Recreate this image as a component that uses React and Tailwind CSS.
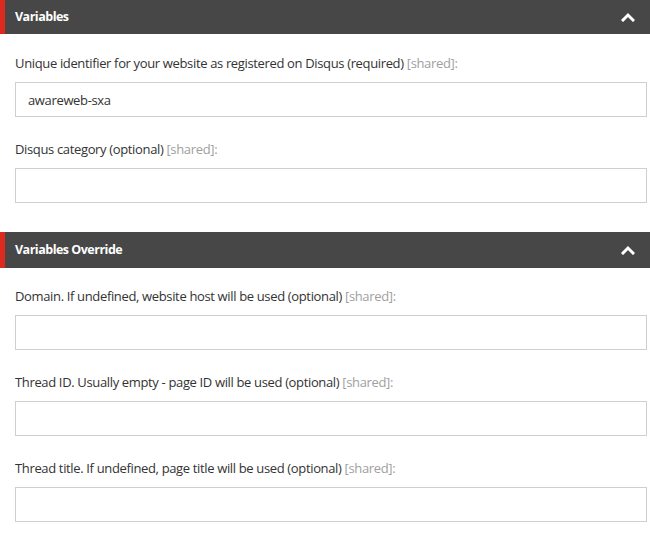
const sections = [
  {
    title: "Variables",
    first: true,
    fields: [
      { label: "Unique identifier for your website as registered on Disqus (required)", value: "awareweb-sxa" },
      { label: "Disqus category (optional)", value: "" },
    ],
  },
  {
    title: "Variables Override",
    fields: [
      { label: "Domain. If undefined, website host will be used (optional)", value: "" },
      { label: "Thread ID. Usually empty - page ID will be used (optional)", value: "" },
      { label: "Thread title. If undefined, page title will be used (optional)", value: "" },
    ],
  },
];

function Chevron() {
  return (
    <svg width="14" height="10" viewBox="0 0 14 10" className="mr-[15px]">
      <path d="M2 8 L7 3 L12 8" fill="none" stroke="#fff" strokeWidth="3" strokeLinecap="square" />
    </svg>
  );
}

function Field({ label, value }) {
  return (
    <div className="mb-[23px] last:mb-0">
      <div className="h-[18px] leading-[18px] mb-[10px] text-[#333] tracking-[-0.35px] whitespace-nowrap">
        {label} <span className="text-[#a0a0a0]">[shared]</span>
        <span className="text-[#a0a0a0]">:</span>
      </div>
      <input
        type="text"
        defaultValue={value}
        className="block w-full h-[35px] border border-[#cfcfcf] bg-white px-[12px] text-[13px] text-[#333] tracking-[-0.35px] outline-none"
        style={{ fontFamily: "inherit" }}
      />
    </div>
  );
}

export default function App() {
  return (
    <div
      className="w-[650px] h-[535px] bg-white text-[13px] overflow-hidden"
      style={{ fontFamily: "'Open Sans', 'Noto Sans', sans-serif" }}
    >
      {sections.map((s, i) => (
        <div key={s.title} className={i > 0 ? "mt-[29px]" : ""}>
          <div className={`flex items-center justify-between bg-[#474747] border-l-[5px] border-[#dc2a1f] ${s.first ? "h-[34px]" : "h-[36px]"}`}>
            <span className="pl-[10px] font-bold text-[12.5px] tracking-[-0.5px] text-white">{s.title}</span>
            <Chevron />
          </div>
          <div className={`${s.first ? "pt-[20px]" : "pt-[19px]"} pl-[15px] pr-[3px]`}>
            {s.fields.map((f) => (
              <Field key={f.label} {...f} />
            ))}
          </div>
        </div>
      ))}
    </div>
  );
}
